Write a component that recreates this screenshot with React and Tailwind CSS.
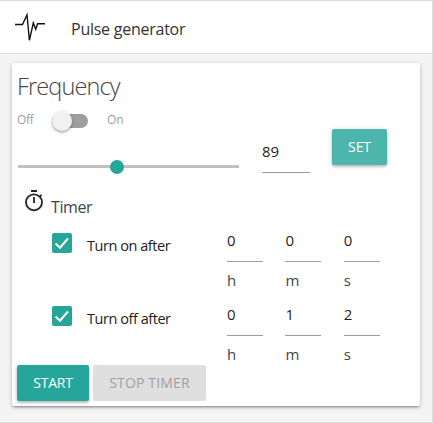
import React from 'react';

function Check() {
  return (
    <span className="flex h-5 w-5 shrink-0 rounded-[2px] bg-[#26a69a]">
      <svg width="20" height="20" viewBox="0 0 20 20" fill="none" stroke="#fff" strokeWidth="2">
        <path d="M3.6 10.6 L8 14.7 L16 5.5" />
      </svg>
    </span>
  );
}

function Unit({ value, unit }) {
  return (
    <div className="flex w-9 flex-col text-[15px]">
      <div className="h-[42px] border-b border-[#9e9e9e] pt-[9px] leading-[22px] text-black/90">{value}</div>
      <div className="mt-[7px] leading-[22px] text-[#444]">{unit}</div>
    </div>
  );
}

function TimerRow({ label, values, checkClass, labelClass }) {
  return (
    <div className="flex h-[74px] pl-[35px]">
      <div className={checkClass}>
        <Check />
      </div>
      <div className={labelClass}>{label}</div>
      <div className="flex gap-[22.4px]">
        <Unit value={values[0]} unit="h" />
        <Unit value={values[1]} unit="m" />
        <Unit value={values[2]} unit="s" />
      </div>
    </div>
  );
}

export default function App() {
  return (
    <div className="flex h-[423px] w-[433px] flex-col overflow-hidden border-t border-r border-b border-[#dcdcdc] bg-[#f4f4f4] font-['Open_Sans','Noto_Sans',sans-serif] text-[#222]">
      <header className="flex h-[53px] shrink-0 items-center border-b border-[#dcdcdc] bg-white">
        <svg className="ml-[15px]" width="32" height="32" viewBox="0 0 32 32" fill="none" stroke="#111" strokeWidth="1.4">
          <path d="M0 13.5H7.5L12 3.8L14.4 29.3L18.3 12L20.7 18.2L22.7 12.8H30" />
        </svg>
        <h1 className="mt-[4px] pl-[24px] text-[16px] leading-[24px] tracking-[-0.25px] whitespace-nowrap text-[#333]">Pulse generator</h1>
      </header>
      <main className="ml-3 mt-[9px] flex h-[343px] w-[408px] shrink-0 flex-col rounded-[2px] bg-white pl-[5px] shadow-[0_2px_2px_0_rgba(0,0,0,0.14),0_3px_1px_-2px_rgba(0,0,0,0.12),0_1px_5px_0_rgba(0,0,0,0.2)]">
        <h2 className="h-[44px] text-[23.5px] leading-[46px] font-light tracking-[-0.85px] text-[#444]">Frequency</h2>
        <div className="flex h-[22px] items-start text-[12px] leading-[26px] text-[#9e9e9e]">
          <span className="w-[35px] tracking-[-0.3px]">Off</span>
          <span className="mt-[7px] flex h-[14px] w-[36px] items-center rounded-full bg-[#9e9e9e]">
            <span className="h-5 w-5 shrink-0 rounded-full bg-[#f1f1f1] shadow-[0_2px_2px_0_rgba(0,0,0,0.2),0_1px_4px_0_rgba(0,0,0,0.15)]" />
          </span>
          <span className="ml-[19px]">On</span>
        </div>
        <div className="flex h-[54px]">
          <div className="ml-[1px] mt-[36px] flex h-[3px] w-[221px] items-center bg-[#c2c0c2]">
            <span className="ml-[92px] h-[14px] w-[14px] shrink-0 rounded-full bg-[#26a69a]" />
          </div>
          <div className="ml-[23px] h-[44px] w-12 border-b border-[#9e9e9e] pt-[11px] text-[15px] leading-[22px] text-black/90">89</div>
          <button className="ml-[22px] h-9 w-[55px] rounded-[2px] bg-[#4db6ac] text-[14px] leading-[36px] font-medium tracking-[-0.1px] text-white shadow-[0_2px_2px_0_rgba(0,0,0,0.14),0_1px_5px_0_rgba(0,0,0,0.2)]">SET</button>
        </div>
        <div className="flex h-[37px] pl-[8px]">
          <svg width="18" height="22" viewBox="0 0 18 22" className="mt-[7px]" fill="none" stroke="#222" strokeWidth="1.8">
            <circle cx="9" cy="12.3" r="8" />
            <path d="M6 1H12M9 7V13M14.8 6.6L16.5 4.9" />
          </svg>
          <span className="ml-[8px] mt-[12px] text-[16px] leading-[24px] tracking-[-0.4px] text-[#444]">Timer</span>
        </div>
        <TimerRow label="Turn on after" values={['0', '0', '0']} checkClass="mt-[13px]" labelClass="ml-[15px] mt-[15px] w-[140px] text-[14.5px] leading-[22px] tracking-[-0.45px] whitespace-nowrap" />
        <TimerRow label="Turn off after" values={['0', '1', '2']} checkClass="mt-[12px]" labelClass="ml-[15px] mt-[14px] w-[140px] text-[14.5px] leading-[22px] tracking-[-0.45px] whitespace-nowrap" />
        <div className="-mt-[3px] flex gap-1 text-[14px] leading-[36px] font-medium">
          <button className="h-9 w-[72px] rounded-[2px] bg-[#26a69a] tracking-[-0.2px] text-white shadow-[0_2px_2px_0_rgba(0,0,0,0.14),0_1px_5px_0_rgba(0,0,0,0.2)]">START</button>
          <button className="h-9 w-[113px] rounded-[2px] bg-[#dfdfdf] tracking-[0.15px] text-[#9f9f9f]">STOP TIMER</button>
        </div>
      </main>
    </div>
  );
}
